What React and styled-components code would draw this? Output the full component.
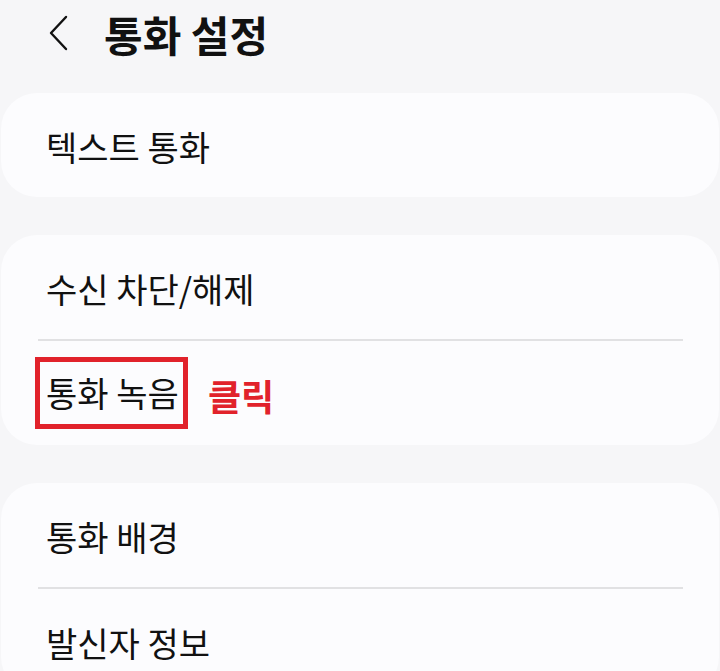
import React from "react";
import styled, { createGlobalStyle } from "styled-components";

const Global = createGlobalStyle`
  html, body { margin: 0; padding: 0; background: #f6f6f8; }
  body { font-family: "Noto Sans CJK KR", "Noto Sans", sans-serif; color: #111; }
`;

const Page = styled.div`
  width: 720px;
  height: 671px;
  overflow: hidden;
  background: #f6f6f8;
`;

const Header = styled.header`
  height: 65px;
  margin-bottom: 28px;
  display: flex;
  align-items: center;
  padding-left: 48px;
  gap: 34px;
`;

const Back = styled.button`
  border: 0;
  background: none;
  padding: 0;
  width: 22px;
  height: 36px;
  display: flex;
  align-items: center;
  justify-content: center;
  color: #111;
`;

const Title = styled.h1`
  margin: 0;
  font-size: 42px;
  font-weight: 700;
  letter-spacing: 0;
  line-height: 1;
  margin-top: 2px;
`;

const List = styled.div`
  display: flex;
  flex-direction: column;
  gap: 38px;
`;

const Card = styled.section`
  background: #fcfcfe;
  border-radius: 36px;
  margin: 0 1px;
`;

const Row = styled.div`
  height: 104px;
  display: flex;
  align-items: center;
  padding-left: 45px;
  padding-top: 4px;
  box-sizing: border-box;
  gap: 20px;
`;

const Label = styled.span`
  font-size: 34px;
  font-weight: 400;
  letter-spacing: 0;
  line-height: 1;
`;

const Divider = styled.div`
  height: 2px;
  margin: 0 36px 0 37px;
  background: #e1e1e3;
`;

const Highlight = styled.span`
  display: inline-flex;
  align-items: center;
  box-sizing: border-box;
  width: 153px;
  height: 72px;
  margin-left: -11px;
  margin-top: -4px;
  padding-left: 6px;
  border: 5px solid #e1222b;
`;

const Note = styled.span`
  font-size: 36px;
  font-weight: 700;
  color: #e1222b;
  line-height: 1;
`;

const Chevron = () => (
  <svg width="20" height="36" viewBox="0 0 20 36" fill="none">
    <path d="M17 2 L2 18 L17 34" stroke="#111" strokeWidth="2.4" strokeLinecap="round" strokeLinejoin="round" />
  </svg>
);

export default function App() {
  return (
    <Page>
      <Global />
      <Header>
        <Back aria-label="뒤로"><Chevron /></Back>
        <Title>통화 설정</Title>
      </Header>
      <List>
        <Card>
          <Row><Label>텍스트 통화</Label></Row>
        </Card>
        <Card>
          <Row><Label>수신 차단/해제</Label></Row>
          <Divider />
          <Row>
            <Highlight><Label>통화 녹음</Label></Highlight>
            <Note>클릭</Note>
          </Row>
        </Card>
        <Card>
          <Row><Label>통화 배경</Label></Row>
          <Divider />
          <Row><Label>발신자 정보</Label></Row>
        </Card>
      </List>
    </Page>
  );
}
